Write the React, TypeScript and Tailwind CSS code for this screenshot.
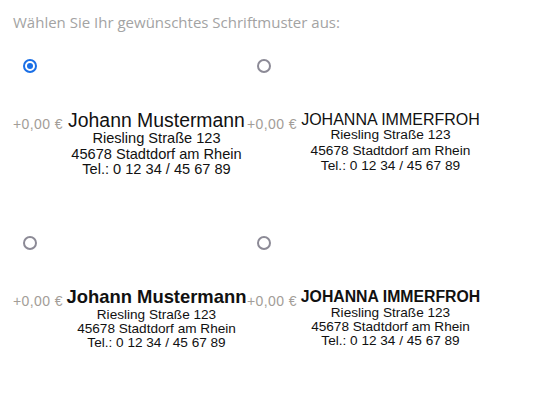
import React, { useState } from "react";

type Sample = {
  id: number;
  name: string;
  nameClass: string;
  addrClass: string;
  padClass: string;
};

const SAMPLES: Sample[] = [
  {
    id: 1,
    name: "Johann Mustermann",
    nameClass: "text-[19.4px] leading-[22px] font-normal",
    addrClass: "text-[14.6px] leading-[15.5px]",
    padClass: "pt-[4px]",
  },
  {
    id: 2,
    name: "JOHANNA IMMERFROH",
    nameClass: "text-[16px] leading-[14px] font-normal",
    addrClass: "text-[13.7px] leading-[15.5px]",
    padClass: "pt-[8px]",
  },
  {
    id: 3,
    name: "Johann Mustermann",
    nameClass: "text-[18.4px] leading-[22px] font-bold",
    addrClass: "text-[13.6px] leading-[14px]",
    padClass: "pt-[4px]",
  },
  {
    id: 4,
    name: "JOHANNA IMMERFROH",
    nameClass: "text-[15.8px] leading-[18px] font-bold",
    addrClass: "text-[13.6px] leading-[14px]",
    padClass: "pt-[6px]",
  },
];

// Vorschau des Schriftmusters (im Original ein Bild)
function SamplePreview({ s }: { s: Sample }) {
  return (
    <div className={`w-[181px] text-center text-[#111] font-['Liberation_Sans',Arial,sans-serif] ${s.padClass}`}>
      <div className={`whitespace-nowrap ${s.nameClass}`}>{s.name}</div>
      <div className={s.addrClass}>Riesling Straße 123</div>
      <div className={s.addrClass}>45678 Stadtdorf am Rhein</div>
      <div className={s.addrClass}>Tel.: 0 12 34 / 45 67 89</div>
    </div>
  );
}

function Radio({ checked }: { checked: boolean }) {
  return (
    <span
      className={`flex items-center justify-center w-[14px] h-[14px] rounded-full border-2 ${
        checked ? "border-[#1a6fe6]" : "border-[#8c8a96]"
      }`}
    >
      {checked && <span className="w-[6px] h-[6px] rounded-full bg-[#1a6fe6]" />}
    </span>
  );
}

export default function App() {
  const [selected, setSelected] = useState(1);

  return (
    <div className="w-[556px] h-[405px] bg-white px-[13px] pt-[12px]">
      <p className="text-[15px] leading-[20px] font-medium text-[#a3a3a3] font-['Open_Sans',sans-serif]">
        Wählen Sie Ihr gewünschtes Schriftmuster aus:
      </p>

      <div className="grid grid-cols-[234px_234px] mt-[27px]">
        {SAMPLES.map((s) => (
          <label key={s.id} className="flex flex-col h-[177px] cursor-pointer">
            <input
              type="radio"
              name="schriftmuster"
              checked={selected === s.id}
              onChange={() => setSelected(s.id)}
              className="sr-only"
            />
            <div className="pl-[10px] h-[14px] flex">
              <Radio checked={selected === s.id} />
            </div>
            <div className="flex mt-[32px]">
              <span className="w-[53px] shrink-0 mt-[11px] text-[14px] leading-[16px] tracking-[0.4px] text-[#a39d98] whitespace-nowrap font-['Liberation_Sans',Arial,sans-serif]">
                +0,00 €
              </span>
              <SamplePreview s={s} />
            </div>
          </label>
        ))}
      </div>
    </div>
  );
}
